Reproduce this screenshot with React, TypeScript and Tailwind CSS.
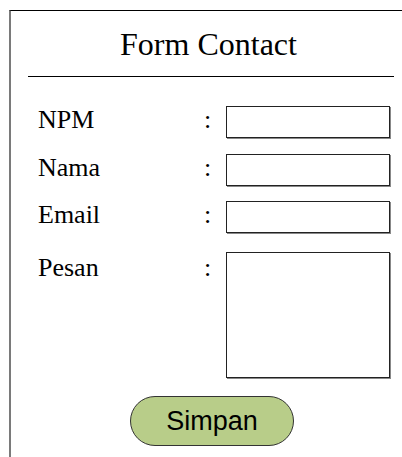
import React from "react"

const serif = "font-['Liberation_Serif','Times_New_Roman',serif]"

const Row = ({ label, top, tall }: { label: string; top: string; tall?: boolean }) => (
  <div className={`flex items-start ${top}`}>
    <span className={`w-[193px] shrink-0 pl-[27px] text-[26px] leading-[28px] text-black ${serif} ${tall ? "mt-[2px]" : ""}`}>
      {label}
    </span>
    <span className={`w-[22px] shrink-0 text-[26px] leading-[28px] text-black ${serif} ${tall ? "mt-[2px]" : ""}`}>:</span>
    {tall ? (
      <textarea className="w-[164px] h-[126px] shrink-0 resize-none border border-[#222] shadow-[1px_1px_0_#888] bg-white outline-none" />
    ) : (
      <input className="w-[164px] h-[32px] shrink-0 border border-[#222] shadow-[1px_1px_0_#888] bg-white outline-none" />
    )}
  </div>
)

export default function App() {
  return (
    <div className="w-[402px] h-[457px] overflow-hidden bg-white">
      <div className="ml-[9px] mt-[10px] w-[420px] h-[470px] border-t border-t-black border-l-2 border-l-[#7a7a7a]">
        <h1 className={`pt-[13px] text-center pr-[23px] text-[32px] leading-[40px] font-normal text-black ${serif}`}>
          Form Contact
        </h1>
        <div className="mt-[12px] ml-[17px] w-[366px] h-px bg-black" />
        <Row label="NPM" top="mt-[29px]" />
        <Row label="Nama" top="mt-[16px]" />
        <Row label="Email" top="mt-[15px]" />
        <Row label="Pesan" top="mt-[19px]" tall />
        <div className="mt-[18px] ml-[119px]">
          <button className="w-[164px] h-[50px] rounded-full border border-[#333] bg-[#b8cd89] text-[27px] text-black font-['Liberation_Sans',Arial,sans-serif]">
            Simpan
          </button>
        </div>
      </div>
    </div>
  )
}
